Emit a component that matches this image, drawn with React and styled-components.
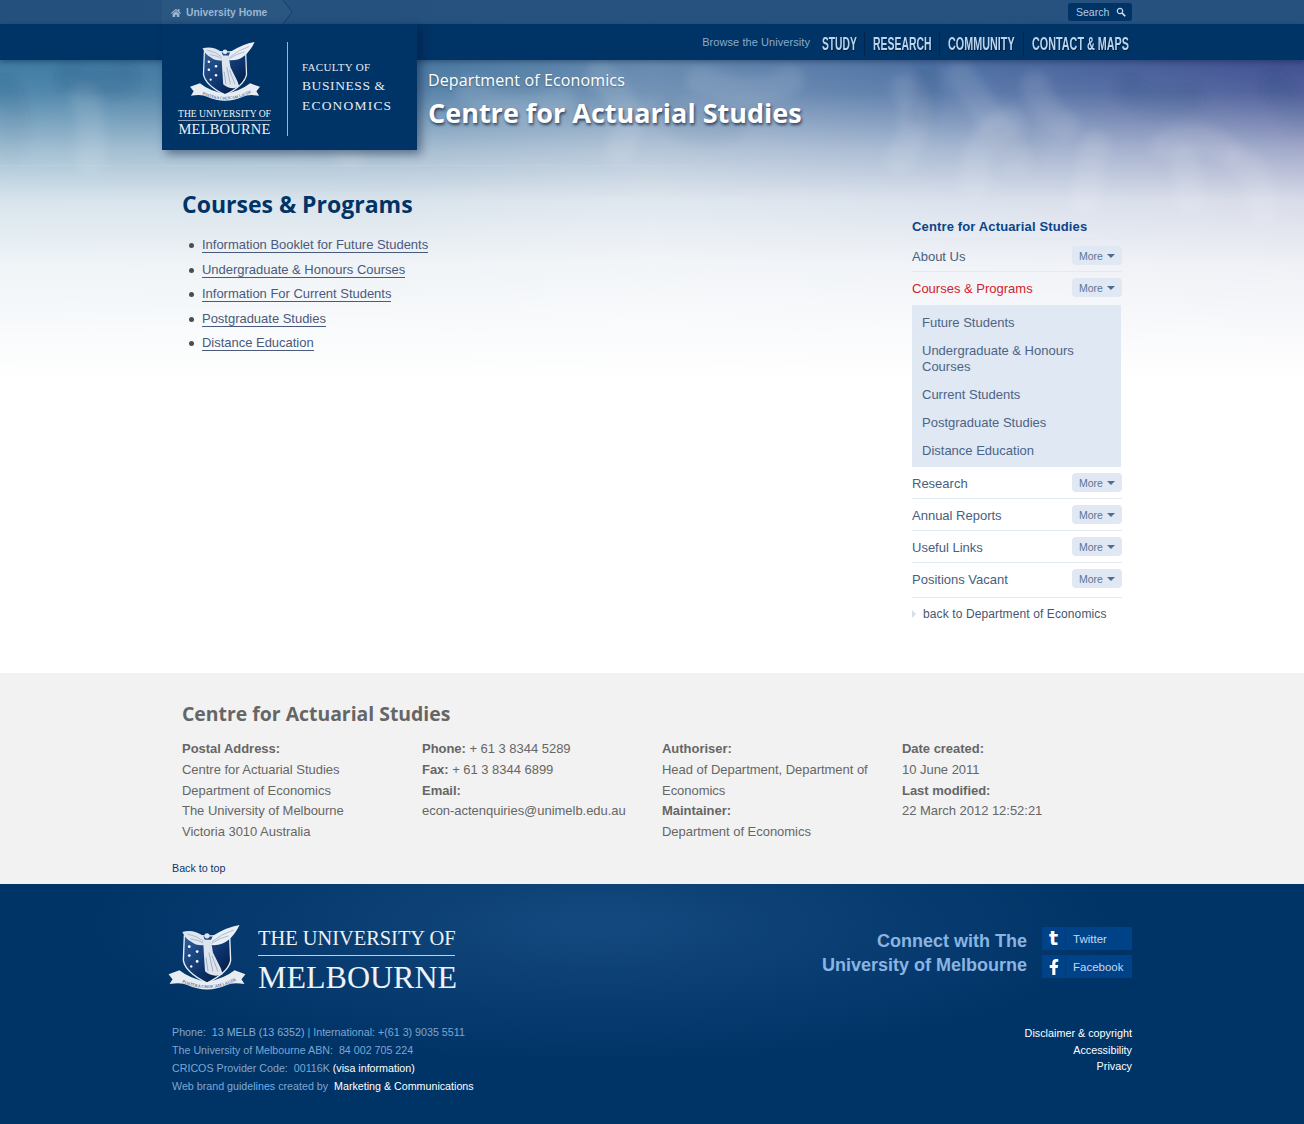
import styled, { createGlobalStyle } from 'styled-components';
import { FaHome, FaFacebookF } from 'react-icons/fa';

const GlobalStyle = createGlobalStyle`
	html, body {
		margin: 0;
		padding: 0;
		background: #fff;
		font-family: 'Liberation Sans', Arial, sans-serif;
	}
`;

const Page = styled.div`
	width: 1304px;
	height: 1124px;
	overflow: hidden;
`;

/* 상단 바 */
const TopBar = styled.div`
	height: 24px;
	background: linear-gradient(90deg, #24507e, #27527f 50%, #26517e);
`;

const Inner = styled.div`
	width: 970px;
	margin-left: 162px;
	display: flex;
	align-items: center;
	justify-content: space-between;
	height: 100%;
	position: relative;
`;

const HomeTab = styled.a`
	display: flex;
	align-items: center;
	gap: 5px;
	width: 122px;
	height: 24px;
	padding: 1px 0 0 9px;
	box-sizing: border-box;
	background: #2a5682;
	color: #9db6d2;
	font-size: 10.3px;
	font-weight: bold;
	position: relative;
	white-space: nowrap;
	svg.home {
		font-size: 10px;
		color: #9db6d2;
	}
`;

const Chevron = styled.svg`
	position: absolute;
	left: 121px;
	top: 0;
`;

const SearchBox = styled.div`
	width: 64px;
	height: 18px;
	background: #003366;
	border-radius: 3px;
	color: #b4cbe3;
	font-size: 10.5px;
	display: flex;
	align-items: center;
	justify-content: space-between;
	padding: 0 6px 0 8px;
	box-sizing: border-box;
`;

/* 메인 네비 */
const NavBar = styled.div`
	height: 36px;
	background: #003366;
	box-shadow: 0 2px 5px rgba(0, 20, 50, 0.35);
	position: relative;
	z-index: 2;
`;

const NavRight = styled.div`
	display: flex;
	align-items: center;
	margin-left: auto;
	padding-right: 4px;
	height: 36px;
`;

const Browse = styled.span`
	font-size: 11px;
	letter-spacing: 0.07px;
	color: #8dabcb;
	margin-right: 12px;
	margin-top: -1px;
	white-space: nowrap;
`;

const NavLink = styled.a`
	font-family: 'Liberation Sans', sans-serif;
	font-weight: bold;
	font-size: 18px;
	line-height: 24px;
	color: #b9d5f0;
	text-shadow: 1px 1px 1px rgba(0, 0, 0, 0.5);
	flex: none;
	width: ${(p) => p.$w}px;
	white-space: nowrap;
	display: block;
	border-right: ${(p) => (p.$last ? 'none' : '1px solid #04254f')};
	margin-right: ${(p) => (p.$last ? 0 : 8)}px;
	margin-top: 4px;
`;

const NavLabel = styled.span`
	display: inline-block;
	transform: scaleX(${(p) => p.$scale || 0.6});
	transform-origin: left center;
`;

const LogoBox = styled.div`
	position: absolute;
	left: 0;
	top: 0;
	width: 255px;
	height: 126px;
	background: #003366;
	box-shadow: 4px 4px 9px rgba(0, 20, 50, 0.45);
	display: flex;
	z-index: 3;
	box-sizing: border-box;
	padding: 18px 0 14px 16px;
`;

const LogoLeft = styled.div`
	width: 93px;
	display: flex;
	flex-direction: column;
	align-items: center;
	color: #eef2f7;
	font-family: 'Liberation Serif', serif;
	svg {
		flex: none;
	}
`;

const WordTop = styled.div`
	flex: none;
	font-size: 9.6px;
	line-height: 12px;
	white-space: nowrap;
	margin-top: 5px;
	width: 93px;
	text-align: center;
	border-bottom: 1px solid #8ea4c0;
`;

const WordBottom = styled.div`
	flex: none;
	font-size: 14.5px;
	line-height: 17px;
	letter-spacing: 0.2px;
	white-space: nowrap;
`;

const LogoRule = styled.div`
	width: 1px;
	height: 94px;
	background: #9fb4cc;
	margin: 0 14px 0 16px;
`;

const Faculty = styled.div`
	font-family: 'Liberation Serif', serif;
	color: #e6ecf3;
	padding-top: 17px;
	white-space: nowrap;
	div {
		font-size: 13.5px;
		line-height: 20px;
		letter-spacing: 0.6px;
	}
	div:first-child {
		font-size: 11px;
		line-height: 17px;
		letter-spacing: 0.3px;
	}
	div:last-child {
		letter-spacing: 1.2px;
	}
`;

/* 배경 영역 */
const Stage = styled.div`
	height: 613px;
	position: relative;
`;

const HeroArt = styled.svg`
	position: absolute;
	left: 0;
	top: 0;
`;

const StageContent = styled.div`
	position: relative;
`;

const Banner = styled.div`
	margin-left: 428px;
	height: 106px;
	padding-top: 7px;
	box-sizing: border-box;
	color: #fff;
	font-family: 'Open Sans', sans-serif;
`;

const Dept = styled.div`
	font-size: 16px;
	line-height: 26px;
	letter-spacing: 0.13px;
	text-shadow: 0 1px 2px rgba(0, 0, 0, 0.3);
`;

const Centre = styled.h1`
	margin: 1px 0 0;
	font-size: 27px;
	line-height: 38px;
	font-weight: bold;
	text-shadow: 1px 2px 3px rgba(0, 20, 50, 0.7);
`;

const Columns = styled.div`
	display: flex;
	padding-left: 182px;
	width: 940px;
	justify-content: space-between;
`;

const Article = styled.div`
	padding-top: 23px;
`;

const Title = styled.h2`
	margin: 0 0 18px;
	font-family: 'Open Sans', sans-serif;
	font-size: 23px;
	line-height: 30px;
	font-weight: bold;
	color: #003366;
`;

const LinkList = styled.ul`
	margin: 0;
	padding: 0;
	list-style: none;
`;

const LinkItem = styled.li`
	display: flex;
	height: 24.5px;
	font-size: 13px;
	line-height: 18px;
	&::before {
		content: '';
		width: 5px;
		height: 5px;
		border-radius: 50%;
		background: #4d4d4d;
		margin: 6px 8px 0 7px;
	}
	a {
		color: #4a5a7c;
		border-bottom: 1px solid #4a5a7c;
		height: 15px;
		line-height: 16px;
		letter-spacing: -0.02px;
	}
`;

/* 사이드 메뉴 */
const Sidebar = styled.div`
	width: 210px;
	padding-top: 52px;
	font-size: 13px;
`;

const SideTitle = styled.div`
	height: 22px;
	line-height: 18px;
	font-weight: bold;
	letter-spacing: 0.14px;
	color: #0b4488;
	border-bottom: 1px solid #e4eaf2;
	box-sizing: border-box;
`;

const SideRow = styled.div`
	display: flex;
	justify-content: space-between;
	align-items: center;
	height: ${(p) => p.$h || 32}px;
	padding-top: ${(p) => (p.$plain ? 0 : 1)}px;
	padding-bottom: ${(p) => p.$pad || 0}px;
	box-sizing: border-box;
	border-bottom: ${(p) => (p.$plain ? 'none' : '1px solid #e2e9f1')};
	color: ${(p) => (p.$active ? '#d2232a' : '#46607f')};
`;

const MoreButton = styled.span`
	width: 50px;
	height: 19px;
	margin-top: -1px;
	background: #dfe8f3;
	border-radius: 4px;
	color: #5e7596;
	font-size: 10.5px;
	display: flex;
	align-items: center;
	justify-content: center;
	gap: 4px;
	&::after {
		content: '';
		border-left: 4px solid transparent;
		border-right: 4px solid transparent;
		border-top: 4px solid #4f6d92;
	}
`;

const SubMenu = styled.div`
	width: 209px;
	margin-top: 1px;
	padding: 3px 10px;
	box-sizing: border-box;
	background: #dfe8f3;
	color: #4c6486;
`;

const SubItem = styled.div`
	padding: 7px 0 5px;
	line-height: 16px;
`;

const BackLink = styled.div`
	margin-top: 7px;
	display: flex;
	align-items: center;
	gap: 7px;
	font-size: 12px;
	line-height: 18px;
	letter-spacing: 0.11px;
	color: #46566f;
	&::before {
		content: '';
		border-left: 4px solid #d3dfeb;
		border-top: 4px solid transparent;
		border-bottom: 4px solid transparent;
	}
`;

/* 회색 정보 영역 */
const InfoBand = styled.div`
	height: 211px;
	background: #f2f2f2;
	color: #666;
	padding: 29px 0 0 182px;
	box-sizing: border-box;
	font-size: 13px;
	letter-spacing: -0.03px;
	position: relative;
`;

const InfoTitle = styled.h3`
	margin: 0 0 13px;
	font-family: 'Open Sans', sans-serif;
	font-size: 19.4px;
	line-height: 24px;
	font-weight: bold;
	letter-spacing: 0;
	color: #666;
`;

const InfoGrid = styled.div`
	display: grid;
	grid-template-columns: repeat(4, 240px);
	line-height: 20.8px;
`;

const InfoCol = styled.div`
	padding-right: 30px;
	b {
		font-weight: bold;
	}
`;

const BackTop = styled.a`
	display: block;
	margin: 18px 0 0 -10px;
	font-size: 10.7px;
	line-height: 14px;
	letter-spacing: 0;
	color: #0a3570;
`;

/* 하단 푸터 */
const Footer = styled.div`
	height: 240px;
	background: radial-gradient(ellipse 520px 140px at 600px 40px, #14497f, transparent 100%), #003366;
	padding-left: 167px;
	width: 965px;
	padding-right: 172px;
	box-sizing: content-box;
`;

const FootTop = styled.div`
	display: flex;
	justify-content: space-between;
	height: 135px;
	padding-top: 41px;
	box-sizing: border-box;
`;

const FootLogo = styled.div`
	display: flex;
	gap: 11px;
	font-family: 'Liberation Serif', serif;
	color: #eef1f6;
`;

const BigWord = styled.div`
	width: 197px;
	text-align: center;
	white-space: nowrap;
`;

const BigTop = styled.div`
	font-size: 20.4px;
	line-height: 26px;
	padding-bottom: 4px;
	border-bottom: 1px solid #c3cfdd;
`;

const BigBottom = styled.div`
	margin-top: 2px;
	font-size: 32px;
	line-height: 38px;
`;

const Connect = styled.div`
	display: flex;
	gap: 15px;
	margin-top: 2px;
`;

const ConnectText = styled.div`
	font-size: 18px;
	font-weight: bold;
	line-height: 24px;
	text-align: right;
	color: #8ab4e2;
	padding-top: 2px;
`;

const Social = styled.div`
	display: flex;
	flex-direction: column;
	gap: 5px;
`;

const SocialLink = styled.a`
	width: 90px;
	height: 23px;
	background: #004287;
	display: flex;
	align-items: center;
	color: #c4d8ee;
	font-size: 11.5px;
	span.glyph {
		width: 24px;
		height: 19px;
		margin-right: 7px;
		display: flex;
		align-items: center;
		justify-content: center;
		color: #fff;
		font: bold 19px/19px 'DejaVu Sans', sans-serif;
		border-right: 1px solid #03397a;
		box-sizing: border-box;
	}
`;

const FootBottom = styled.div`
	display: flex;
	justify-content: space-between;
	margin-left: 5px;
`;

const Legal = styled.div`
	font-size: 10.7px;
	line-height: 18px;
	color: #7ea6d2;
	padding-top: 4px;
	span {
		color: #ffffff;
	}
	a {
		color: #74aee8;
	}
	i {
		font-style: normal;
		color: #80aedf;
	}
`;

const LegalRight = styled.div`
	font-size: 10.8px;
	text-align: right;
	line-height: 16.5px;
	color: #fff;
	padding-top: 6px;
`;

/* 배경 무늬 */
const lightBlobs = [
	'M85 40 Q95 70 90 100',
	'M190 30 Q230 45 260 30',
	'M300 80 Q330 60 350 95',
	'M470 30 Q510 60 560 40',
	'M600 15 Q640 50 620 90',
	'M700 20 Q760 40 790 20',
	'M905 28 Q925 60 900 100',
	'M960 15 Q990 55 1015 100',
	'M1010 60 Q970 80 975 125',
	'M1035 25 Q1045 55 1065 65',
	'M1095 85 Q1090 110 1085 140',
	'M1165 85 Q1200 70 1225 90',
	'M1185 100 L1190 140',
	'M1240 100 Q1260 110 1262 150',
];

const darkBlobs = [
	'M5 30 Q20 60 10 90',
	'M70 18 Q100 30 125 20',
	'M215 15 Q250 55 235 70',
	'M670 55 Q700 80 730 65',
	'M925 20 Q930 40 920 55',
	'M1000 80 Q1000 100 1030 90',
	'M1130 30 Q1150 50 1190 40',
	'M1275 25 Q1290 50 1300 60',
];

const Hero = () => (
	<HeroArt width='1304' height='320' viewBox='0 0 1304 320'>
		<defs>
			<linearGradient id='heroBase'>
				<stop offset='0' stopColor='#3d7ba3' />
				<stop offset='0.3' stopColor='#44759f' />
				<stop offset='0.5' stopColor='#6488ae' />
				<stop offset='0.72' stopColor='#4c6fa3' />
				<stop offset='1' stopColor='#3f4f91' />
			</linearGradient>
			<linearGradient id='heroFade' x1='0' y1='0' x2='0' y2='1'>
				<stop offset='0' stopColor='#fff' stopOpacity='0' />
				<stop offset='0.1' stopColor='#fff' stopOpacity='0.1' />
				<stop offset='0.28' stopColor='#fff' stopOpacity='0.52' />
				<stop offset='0.44' stopColor='#fff' stopOpacity='0.8' />
				<stop offset='0.64' stopColor='#fff' stopOpacity='0.92' />
				<stop offset='1' stopColor='#fff' stopOpacity='1' />
			</linearGradient>
			<filter id='heroBlur' x='-20%' y='-20%' width='140%' height='140%'>
				<feGaussianBlur stdDeviation='5' />
			</filter>
		</defs>
		<rect width='1304' height='320' fill='url(#heroBase)' />
		<g filter='url(#heroBlur)' fill='none' strokeLinecap='round'>
			{lightBlobs.map((d) => (
				<path key={d} d={d} stroke='#fff' strokeOpacity='0.1' strokeWidth='28' />
			))}
			{darkBlobs.map((d) => (
				<path key={d} d={d} stroke='#0d2f66' strokeOpacity='0.13' strokeWidth='30' />
			))}
		</g>
		<rect width='1304' height='320' fill='url(#heroFade)' />
		<rect y='105' width='692' height='1' fill='#fff' fillOpacity='0.08' />
	</HeroArt>
);

const Crest = ({ width, height, id }) => (
	<svg width={width} height={height} viewBox='0 0 80 68'>
		<defs>
			<linearGradient id={`shield-${id}`} x1='0' y1='0' x2='1' y2='1'>
				<stop offset='0' stopColor='#2f5f9f' />
				<stop offset='0.6' stopColor='#0b2f66' />
				<stop offset='1' stopColor='#00153a' />
			</linearGradient>
		</defs>
		<path d='M17 11 L63 11 L64 36 Q62 48 40 59 Q18 48 16 36 Z' fill={`url(#shield-${id})`} stroke='#e8edf4' strokeWidth='1.4' />
		{/* 날개 */}
		<path d='M15 7 Q26 4 36 11 L40 20 Q30 22 24 17 Q18 14 15 7 Z' fill='#dfe6ef' />
		<path d='M73 0 Q60 2 46 11 L42 20 Q54 22 62 15 Q69 9 73 0 Z' fill='#eaeff5' />
		<g stroke='#8ea3bf' strokeWidth='0.7' fill='none'>
			<path d='M20 9 Q30 11 37 17' />
			<path d='M23 14 Q31 15 38 19' />
			<path d='M67 5 Q55 9 45 17' />
			<path d='M62 11 Q53 13 44 19' />
		</g>
		{/* 인물 */}
		<circle cx='40' cy='11' r='2.6' fill='#dfe6ef' />
		<path d='M36 15 L44 15 L46 28 L54 44 L56 50 Q46 54 38 47 L37 32 Z' fill='#dde4ed' />
		<path d='M42 28 L46 47 M39 33 L41 47 M45 31 L51 47' stroke='#8397b4' strokeWidth='0.7' fill='none' />
		{/* 별 */}
		<g fill='#fff'>
			<circle cx='22' cy='22' r='1.4' />
			<circle cx='30' cy='27' r='1.4' />
			<circle cx='22' cy='31' r='1.4' />
			<circle cx='30' cy='37' r='1.4' />
			<circle cx='24' cy='42' r='1.2' />
		</g>
		{/* 리본 */}
		<path d='M1 50 L12 46 Q22 54 40 58 Q58 54 68 46 L79 50 L75 55 L78 60 Q66 58 60 61 Q40 70 20 61 Q14 58 2 60 L5 55 Z' fill='#e8edf4' />
		<path id={`ribbon-${id}`} d='M10 56 Q40 72 70 56' fill='none' />
		<text fontSize='4.4' fontFamily='Liberation Serif, serif' fill='#17386a'>
			<textPath href={`#ribbon-${id}`} startOffset='8%'>POSTERA CRESCAM LAUDE</textPath>
		</text>
	</svg>
);

const App = () => {
	return (
		<Page>
			<GlobalStyle />
			<TopBar>
				<Inner>
					<HomeTab>
						<FaHome className='home' />
						University Home
						<Chevron width='10' height='24' viewBox='0 0 10 24'>
							<path d='M0 0 L9 12 L0 24 Z' fill='#2a5682' />
							<polyline points='0,0 9,12 0,24' fill='none' stroke='#173f6c' strokeWidth='1' />
						</Chevron>
					</HomeTab>
					<SearchBox>
						Search
						<svg width='10' height='10' viewBox='0 0 10 10'>
							<circle cx='4' cy='4' r='2.7' fill='none' stroke='#c7d8ea' strokeWidth='1.2' />
							<line x1='6' y1='6' x2='9.2' y2='9.2' stroke='#e3edf6' strokeWidth='1.6' />
						</svg>
					</SearchBox>
				</Inner>
			</TopBar>
			<NavBar>
				<Inner>
					<LogoBox>
						<LogoLeft>
							<Crest width='72' height='61' id='head' />
							<WordTop>THE UNIVERSITY OF</WordTop>
							<WordBottom>MELBOURNE</WordBottom>
						</LogoLeft>
						<LogoRule />
						<Faculty>
							<div>FACULTY OF</div>
							<div>BUSINESS &amp;</div>
							<div>ECONOMICS</div>
						</Faculty>
					</LogoBox>
					<NavRight>
						<Browse>Browse the University</Browse>
						<NavLink $w={42}><NavLabel $scale={0.57}>STUDY</NavLabel></NavLink>
						<NavLink $w={66}><NavLabel $scale={0.58}>RESEARCH</NavLabel></NavLink>
						<NavLink $w={75}><NavLabel>COMMUNITY</NavLabel></NavLink>
						<NavLink $w={96} $last><NavLabel>CONTACT &amp; MAPS</NavLabel></NavLink>
					</NavRight>
				</Inner>
			</NavBar>
			<Stage>
				<Hero />
				<StageContent>
					<Banner>
						<Dept>Department of Economics</Dept>
						<Centre>Centre for Actuarial Studies</Centre>
					</Banner>
					<Columns>
						<Article>
							<Title>Courses &amp; Programs</Title>
							<LinkList>
								<LinkItem><a>Information Booklet for Future Students</a></LinkItem>
								<LinkItem><a>Undergraduate &amp; Honours Courses</a></LinkItem>
								<LinkItem><a>Information For Current Students</a></LinkItem>
								<LinkItem><a>Postgraduate Studies</a></LinkItem>
								<LinkItem><a>Distance Education</a></LinkItem>
							</LinkList>
						</Article>
						<Sidebar>
							<SideTitle>Centre for Actuarial Studies</SideTitle>
							<SideRow>About Us<MoreButton>More</MoreButton></SideRow>
							<SideRow $active $plain>Courses &amp; Programs<MoreButton>More</MoreButton></SideRow>
							<SubMenu>
								<SubItem>Future Students</SubItem>
								<SubItem>Undergraduate &amp; Honours Courses</SubItem>
								<SubItem>Current Students</SubItem>
								<SubItem>Postgraduate Studies</SubItem>
								<SubItem>Distance Education</SubItem>
							</SubMenu>
							<SideRow>Research<MoreButton>More</MoreButton></SideRow>
							<SideRow>Annual Reports<MoreButton>More</MoreButton></SideRow>
							<SideRow>Useful Links<MoreButton>More</MoreButton></SideRow>
							<SideRow $h={35} $pad={3}>Positions Vacant<MoreButton>More</MoreButton></SideRow>
							<BackLink>back to Department of Economics</BackLink>
						</Sidebar>
					</Columns>
				</StageContent>
			</Stage>
			<InfoBand>
				<InfoTitle>Centre for Actuarial Studies</InfoTitle>
				<InfoGrid>
					<InfoCol>
						<b>Postal Address:</b><br />
						Centre for Actuarial Studies<br />
						Department of Economics<br />
						The University of Melbourne<br />
						Victoria 3010 Australia
					</InfoCol>
					<InfoCol>
						<b>Phone:</b> + 61 3 8344 5289<br />
						<b>Fax:</b> + 61 3 8344 6899<br />
						<b>Email:</b><br />
						econ-actenquiries@unimelb.edu.au
					</InfoCol>
					<InfoCol>
						<b>Authoriser:</b><br />
						Head of Department, Department of Economics<br />
						<b>Maintainer:</b><br />
						Department of Economics
					</InfoCol>
					<InfoCol>
						<b>Date created:</b><br />
						10 June 2011<br />
						<b>Last modified:</b><br />
						22 March 2012 12:52:21
					</InfoCol>
				</InfoGrid>
				<BackTop>Back to top</BackTop>
			</InfoBand>
			<Footer>
				<FootTop>
					<FootLogo>
						<Crest width='80' height='67' id='foot' />
						<BigWord>
							<BigTop>THE UNIVERSITY OF</BigTop>
							<BigBottom>MELBOURNE</BigBottom>
						</BigWord>
					</FootLogo>
					<Connect>
						<ConnectText>Connect with The<br />University of Melbourne</ConnectText>
						<Social>
							<SocialLink><span className='glyph'>t</span>Twitter</SocialLink>
							<SocialLink><span className='glyph'><FaFacebookF size={16} /></span>Facebook</SocialLink>
						</Social>
					</Connect>
				</FootTop>
				<FootBottom>
					<Legal>
						Phone:&nbsp; <i>13 MELB (13 6352)</i> | International: +(61 3) 9035 5511<br />
						The University of Melbourne ABN:&nbsp; 84 002 705 224<br />
						CRICOS Provider Code:&nbsp; 00116K <span>(visa information)</span><br />
						Web brand <a>guidelines</a> created by&nbsp; <span>Marketing &amp; Communications</span>
					</Legal>
					<LegalRight>
						Disclaimer &amp; copyright<br />
						Accessibility<br />
						Privacy
					</LegalRight>
				</FootBottom>
			</Footer>
		</Page>
	);
};

export default App;
